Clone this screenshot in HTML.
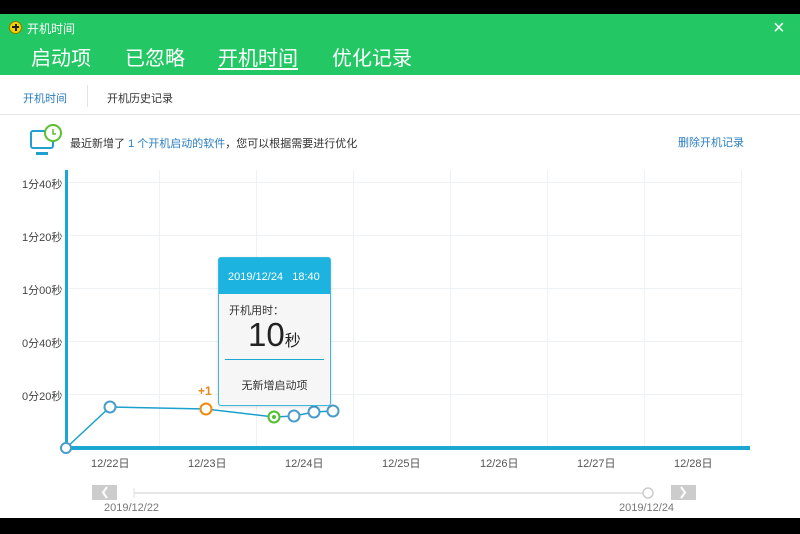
<!DOCTYPE html>
<html><head><meta charset="utf-8"><style>
*{margin:0;padding:0;box-sizing:border-box}
body{width:800px;height:534px;background:#000;position:relative;overflow:hidden;font-family:"Liberation Sans","Noto Sans CJK SC",sans-serif}
.abs{position:absolute}
#main{left:0;top:14px;width:800px;height:504px;background:#fff}
#hdr{left:0;top:14px;width:800px;height:61px;background:#23c864}
.tab{position:absolute;top:27px;color:#fff;font-size:20px}
.t{font-size:11px;color:#333;position:absolute}
.yl{position:absolute;left:22px;font-size:11px;color:#444}
.xl{position:absolute;top:455px;font-size:11px;color:#555}
</style></head><body>
<div id="main" class="abs"></div>
<div id="hdr" class="abs"></div>
<div class="abs" style="left:9px;top:21px;width:13px;height:13px;border-radius:50%;background:#f5d000;border:1px solid #8a7a00"></div>
<div class="abs" style="left:12px;top:26px;width:7px;height:2px;background:#222"></div>
<div class="abs" style="left:14.5px;top:23.5px;width:2px;height:7px;background:#222"></div>
<div class="abs" style="left:27px;top:20px;font-size:12px;color:#fff">开机时间</div>
<div class="abs" style="left:773px;top:17px;font-size:20px;color:#fff">×</div>
<div class="tab" style="left:31px;top:42px">启动项</div>
<div class="tab" style="left:125px;top:42px">已忽略</div>
<div class="tab" style="left:218px;top:42px">开机时间</div>
<div class="abs" style="left:218px;top:68px;width:80px;height:2px;background:#fff"></div>
<div class="tab" style="left:332px;top:42px">优化记录</div>
<div class="t" style="left:23px;top:90px;color:#2a7ec0">开机时间</div>
<div class="abs" style="left:87px;top:85px;width:1px;height:22px;background:#e4e4e4"></div>
<div class="t" style="left:107px;top:90px">开机历史记录</div>
<div class="abs" style="left:0;top:114px;width:800px;height:1px;background:#e5e5e5"></div>
<svg class="abs" style="left:28px;top:124px" width="34" height="36"><rect x="3" y="7" width="22" height="17" rx="2" fill="none" stroke="#1fa0d0" stroke-width="2"/><rect x="8" y="28" width="12" height="3" fill="#1fa0d0"/><circle cx="25" cy="9" r="8" fill="#fff" stroke="#5cc030" stroke-width="2"/><path d="M25 5v5h3" stroke="#5cc030" stroke-width="1.5" fill="none"/></svg>
<div class="t" style="left:70px;top:135px">最近新增了 <span style="color:#2a7ec0">1 个开机启动的软件</span>，您可以根据需要进行优化</div>
<div class="t" style="left:678px;top:134px;color:#2a7ec0">删除开机记录</div>
<svg class="abs" style="left:0;top:0" width="800" height="534">
<g stroke="#eef2f5" stroke-width="1">
<line x1="66" y1="182.5" x2="742" y2="182.5"/><line x1="66" y1="235.5" x2="742" y2="235.5"/><line x1="66" y1="288.5" x2="742" y2="288.5"/><line x1="66" y1="341.5" x2="742" y2="341.5"/><line x1="66" y1="394.5" x2="742" y2="394.5"/>
<line x1="159.5" y1="170" x2="159.5" y2="448"/><line x1="256.5" y1="170" x2="256.5" y2="448"/><line x1="353.5" y1="170" x2="353.5" y2="448"/><line x1="450.5" y1="170" x2="450.5" y2="448"/><line x1="547.5" y1="170" x2="547.5" y2="448"/><line x1="644.5" y1="170" x2="644.5" y2="448"/><line x1="741.5" y1="170" x2="741.5" y2="448"/>
</g>
<rect x="65" y="170" width="3" height="280" fill="#1aa8d2"/>
<rect x="65" y="446" width="685" height="4" fill="#1aa8d2"/>
<polyline points="66,448 110,407 206,409 274,417 294,416 314,412 333,411" fill="none" stroke="#1aa0cc" stroke-width="1.5"/>
<g fill="#fff" stroke-width="2">
<circle cx="66" cy="448" r="5" stroke="#4a9ccc"/>
<circle cx="110" cy="407" r="5.5" stroke="#4a9ccc"/>
<circle cx="206" cy="409" r="5.5" stroke="#ee8a10"/>
<circle cx="274" cy="417" r="5.5" stroke="#50c030"/>
<circle cx="294" cy="416" r="5.5" stroke="#4a9ccc"/>
<circle cx="314" cy="412" r="5.5" stroke="#4a9ccc"/>
<circle cx="333" cy="411" r="5.5" stroke="#4a9ccc"/>
</g>
<circle cx="274" cy="417" r="2" fill="#50c030"/>
<text x="198" y="395" font-size="12" font-weight="bold" fill="#e08a20" font-family="Liberation Sans">+1</text>
<line x1="134" y1="493" x2="648" y2="493" stroke="#ddd" stroke-width="1.5"/>
<line x1="134" y1="488" x2="134" y2="498" stroke="#ddd"/>
<circle cx="648" cy="493" r="5" fill="#fff" stroke="#ccc" stroke-width="1.5"/>
<rect x="92" y="485" width="25" height="15" fill="#ccc"/>
<path d="M107 487l-4 5.5 4 5.5" stroke="#fff" stroke-width="2" fill="none"/>
<rect x="671" y="485" width="25" height="15" fill="#ccc"/>
<path d="M681 487l4 5.5-4 5.5" stroke="#fff" stroke-width="2" fill="none"/>
</svg>
<div class="yl" style="top:176px">1分40秒</div>
<div class="yl" style="top:229px">1分20秒</div>
<div class="yl" style="top:282px">1分00秒</div>
<div class="yl" style="top:335px">0分40秒</div>
<div class="yl" style="top:388px">0分20秒</div>
<div class="xl" style="left:91px">12/22日</div>
<div class="xl" style="left:188px">12/23日</div>
<div class="xl" style="left:285px">12/24日</div>
<div class="xl" style="left:382px">12/25日</div>
<div class="xl" style="left:480px">12/26日</div>
<div class="xl" style="left:577px">12/27日</div>
<div class="xl" style="left:674px">12/28日</div>
<div class="abs" style="left:104px;top:502px;font-size:11px;color:#777">2019/12/22</div>
<div class="abs" style="left:619px;top:502px;font-size:11px;color:#777">2019/12/24</div>
<div class="abs" style="left:218px;top:257px;width:113px;height:149px;background:#f6f6f6;border:1px solid #3bb8dc;border-radius:3px;box-shadow:0 1px 3px rgba(0,0,0,.15)">
<div style="height:36px;background:#1cb3e0;color:#fff;font-size:11px;line-height:38px;padding-left:9px">2019/12/24&nbsp;&nbsp;&nbsp;18:40</div>
<div style="position:absolute;left:10px;top:44px;font-size:11px;color:#333">开机用时：</div>
<div style="position:absolute;left:29px;top:58px;font-size:33px;color:#222">10<span style="font-size:16px">秒</span></div>
<div style="position:absolute;left:6px;top:101px;width:99px;height:1px;background:#1aa8d2"></div>
<div style="position:absolute;left:0;width:111px;top:119px;text-align:center;font-size:11px;color:#333">无新增启动项</div>
</div>
</body></html>
